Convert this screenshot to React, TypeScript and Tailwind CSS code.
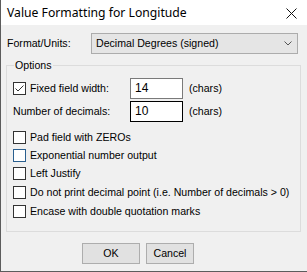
import React from "react";

const font = { fontFamily: '"Liberation Sans", Arial, sans-serif' };

function Check({ checked = false, blue = false }: { checked?: boolean; blue?: boolean }) {
  return (
    <div
      className={`w-[13px] h-[13px] shrink-0 bg-white border ${blue ? "border-[#2a5f8f]" : "border-[#333333]"}`}
    >
      {checked && (
        <svg width="11" height="11" viewBox="0 0 11 11" className="block">
          <polyline points="1.5,5.5 4,8 9.5,2.5" fill="none" stroke="#333" strokeWidth="1" />
        </svg>
      )}
    </div>
  );
}

function CheckRow({ label, blue = false, className = "" }: { label: string; blue?: boolean; className?: string }) {
  return (
    <div className={`flex items-center h-[13px] ${className}`}>
      <Check blue={blue} />
      <span className="ml-[4px] leading-[13px] whitespace-nowrap">{label}</span>
    </div>
  );
}

export default function App() {
  return (
    <div
      className="w-[307px] h-[272px] bg-[#f0f0f0] border-l border-b border-[#5c5c5c] flex flex-col text-[10.6px] text-black"
      style={font}
    >
      <div className="h-[25px] bg-white flex items-center justify-between pl-[6px] pr-[10px] shrink-0">
        <span className="text-[12.2px] leading-[16px]" style={{ fontFamily: '"Noto Sans", "Open Sans", sans-serif' }}>
          Value Formatting for Longitude
        </span>
        <svg width="11" height="11" viewBox="0 0 11 11" className="block mt-[2px]">
          <path d="M0.5 0.5 L10.5 10.5 M10.5 0.5 L0.5 10.5" stroke="#111" strokeWidth="1" />
        </svg>
      </div>

      <div className="flex items-center mt-[8px] pl-[6px] h-[21px]">
        <span className="w-[84px] leading-[13px]">Format/Units:</span>
        <div className="w-[207px] h-[21px] bg-[#e5e5e5] border border-[#acacac] flex items-center justify-between pl-[4px] pr-[5px]">
          <span className="leading-[13px]">Decimal Degrees (signed)</span>
          <svg width="8" height="5" viewBox="0 0 8 5" className="block">
            <polyline points="0.5,0.5 4,4 7.5,0.5" fill="none" stroke="#555" strokeWidth="1" />
          </svg>
        </div>
      </div>

      <div className="relative ml-[5px] mt-[11px] w-[295px] h-[167px] border border-[#dcdcdc] pl-[6px] pt-[12px]">
        <span className="absolute -top-[7px] left-[7px] bg-[#f0f0f0] px-[1px] leading-[13px]">Options</span>

        <div className="flex items-center h-[21px]">
          <div className="w-[117px] flex items-center">
            <Check checked />
            <span className="ml-[4px] leading-[13px]">Fixed field width:</span>
          </div>
          <div className="w-[53px] h-[21px] bg-white border border-[#7a7a7a] pl-[4px] flex items-center leading-[13px] text-[12px]">14</div>
          <span className="ml-[6px] leading-[13px]">(chars)</span>
        </div>

        <div className="flex items-center h-[21px] mt-[2px]">
          <div className="w-[117px] leading-[13px]">Number of decimals:</div>
          <div className="w-[53px] h-[21px] bg-white border border-black pl-[4px] flex items-center leading-[13px] text-[12px]">10</div>
          <span className="ml-[6px] leading-[13px]">(chars)</span>
        </div>

        <CheckRow label="Pad field with ZEROs" className="mt-[9px]" />
        <CheckRow label="Exponential number output" blue className="mt-[5px]" />
        <CheckRow label="Left Justify" className="mt-[5px]" />
        <CheckRow label="Do not print decimal point (i.e. Number of decimals > 0)" className="mt-[6px]" />
        <CheckRow label="Encase with double quotation marks" className="mt-[6px]" />
      </div>

      <div className="flex mt-[11px] pl-[81px] gap-[6px]">
        <div className="w-[58px] h-[21px] bg-[#e1e1e1] border border-[#adadad] flex items-center justify-center leading-[13px]">OK</div>
        <div className="w-[48px] h-[21px] bg-[#e1e1e1] border border-[#adadad] flex items-center justify-center leading-[13px]">Cancel</div>
      </div>
    </div>
  );
}
